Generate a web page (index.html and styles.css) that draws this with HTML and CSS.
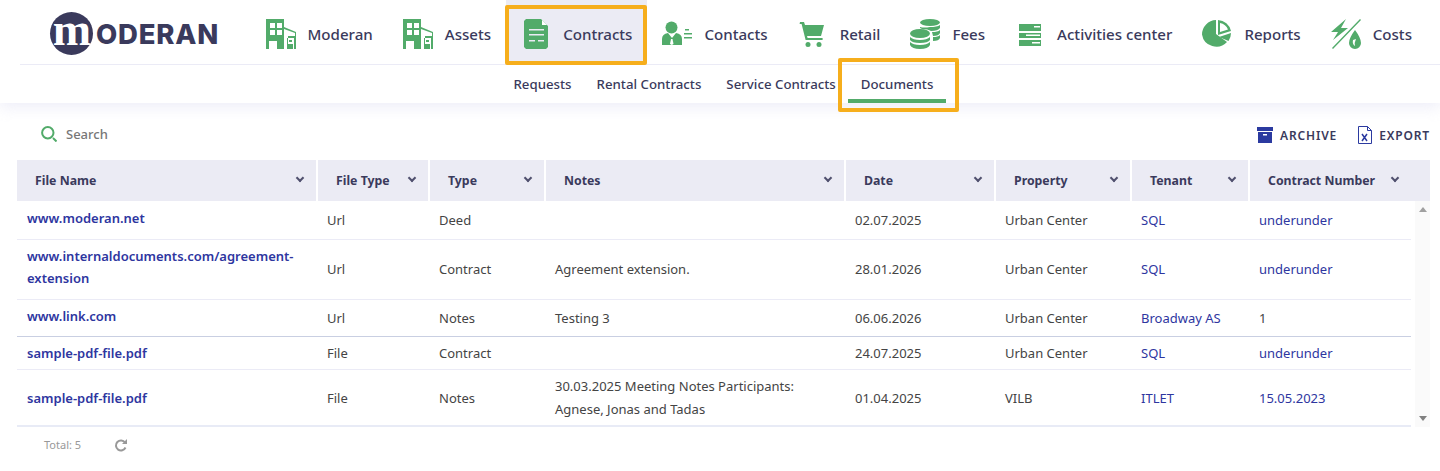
FILE: index.html
```html
<!DOCTYPE html>
<html lang="en">
<head>
  <meta charset="UTF-8">
  <title>Documents</title>
  <link rel="stylesheet" href="styles.css">
</head>
<body>
  <header class="top">
    <div class="main-nav">
      <div class="logo"><span class="logo-mark">m</span><span class="logo-text">ODERAN</span></div>
      <nav class="menu">
        <a class="menu-item">
          <svg class="menu-icon" viewBox="0 0 30 30"><path fill="#52ab6a" fill-rule="evenodd" d="M0 0h18v8l12 5v17h-8v-13h7v-3l-11-4v20h-7v-8h-8v8h-3zM4 4v5h5v-5zM11 4v5h5v-5zM4 11v5h5v-5zM11 11v5h5v-5zM21 19v11h1v-5h5v5h1v-11zM23 21h3v2h-3z"/></svg>
          Moderan
        </a>
        <a class="menu-item">
          <svg class="menu-icon" viewBox="0 0 30 30"><path fill="#52ab6a" fill-rule="evenodd" d="M0 0h18v8l12 5v17h-8v-13h7v-3l-11-4v20h-7v-8h-8v8h-3zM4 4v5h5v-5zM11 4v5h5v-5zM4 11v5h5v-5zM11 11v5h5v-5zM21 19v11h1v-5h5v5h1v-11zM23 21h3v2h-3z"/></svg>
          Assets
        </a>
        <a class="menu-item active">
          <svg class="menu-icon" viewBox="0 0 30 30"><path fill="#52ab6a" fill-rule="evenodd" d="M5 0h15l7 7v21l-2 2h-20l-2-2v-26zM8 10v1.500h15v-1.500zM8 15v1.500h15v-1.500zM8 21v1.500h6v-1.500zM17 21v1.500h6v-1.500z"/><path fill="#fff" d="M21 1l5 5h-5z"/></svg>
          Contracts
        </a>
        <a class="menu-item">
          <svg class="menu-icon" viewBox="0 0 30 30"><circle cx="9.500" cy="8.500" r="6" fill="#52ab6a"/><path fill="#52ab6a" d="M0 26v-6q0-5 6-6l4 5 4-5q6 1 6 6v6z"/><path fill="#fff" d="M9 20h1.500l1 5-1.700 1-1.800-1z"/><path fill="#52ab6a" d="M23 10h4v1.500h-4zM22 14h8v1.500h-8zM22 18h8v1.500h-8z"/></svg>
          Contacts
        </a>
        <a class="menu-item">
          <svg class="menu-icon" viewBox="0 0 30 30"><path fill="#52ab6a" d="M2 3h4l1 3h19l-3 11h-14l.6 2h15v2h-17l-4-16h-2z"/><circle cx="10" cy="25.500" r="2.500" fill="#52ab6a"/><circle cx="21" cy="25.500" r="2.500" fill="#52ab6a"/></svg>
          Retail
        </a>
        <a class="menu-item">
          <svg class="menu-icon" viewBox="0 0 30 30"><ellipse cx="20" cy="3.500" rx="10" ry="3.500" fill="#52ab6a"/><path fill="#52ab6a" d="M20 8q7 0 10-2v3q-2 3-9 3-3-2-9-2l-2-1v-1q4 1 10 0zM22 13q6 0 8-2v3q-1 3-7 3zM23 18q5 0 7-2v3q-1 3-7 3z"/><ellipse cx="10" cy="14.500" rx="10" ry="4.500" fill="#52ab6a"/><path fill="#52ab6a" d="M0 18q3 3 10 3t10-3v3q-2 3-10 3t-10-3zM0 23q3 3 10 3t10-3v3q-2 4-10 4t-10-4z"/></svg>
          Fees
        </a>
        <a class="menu-item">
          <svg class="menu-icon" viewBox="0 0 30 30"><path fill="#52ab6a" fill-rule="evenodd" d="M4 5h22v7h-22zM19 7v1.500h6v-1.500zM4 14h22v5h-22zM11 15.500v1.500h14v-1.500zM4 21h22v6h-22zM17 23v1.500h8v-1.500z"/></svg>
          Activities center
        </a>
        <a class="menu-item">
          <svg class="menu-icon" viewBox="0 0 30 30"><path fill="#52ab6a" d="M14 1v14l11 8a14.500 14.500 0 0 1-25-7.500a14.500 14.500 0 0 1 14-14.500z"/><path fill="#52ab6a" fill-rule="evenodd" d="M16 1a14 14 0 0 1 13 11l-13 4zM18 4v9l8-2.500a11 11 0 0 0-8-6.500z"/><path fill="#52ab6a" d="M17 18l12-4a14 14 0 0 1-2.500 8z"/></svg>
          Reports
        </a>
        <a class="menu-item">
          <svg class="menu-icon" viewBox="0 0 30 30"><path fill="#52ab6a" d="M15 0l-15 13h7l-5 8 15-12h-7zM29 0l1 1-28 29-1-1z"/><path fill="#52ab6a" fill-rule="evenodd" d="M24 11q6 8 6 13a6 6 0 0 1-12 0q0-5 6-13zM22 21q-1 4 2 6-1-3 1-7z"/></svg>
          Costs
        </a>
      </nav>
    </div>
    <nav class="sub-nav">
      <a class="sub-item">Requests</a>
      <a class="sub-item">Rental Contracts</a>
      <a class="sub-item">Service Contracts</a>
      <a class="sub-item active">Documents</a>
    </nav>
  </header>

  <div class="toolbar">
    <div class="search">
      <svg class="search-icon" viewBox="0 0 16 16"><circle cx="6.800" cy="6.800" r="5.700" fill="none" stroke="#52ab6a" stroke-width="2"/><path stroke="#52ab6a" stroke-width="2" d="M12 12l3.500 3.500"/></svg>
      Search
    </div>
    <div class="actions">
      <a class="action">
        <svg class="action-icon" viewBox="0 0 16 16"><path fill="#2b3aa0" d="M0 0h16v4h-16zM1 5h14v11h-14z"/><path fill="#fff" d="M6 7h4v1.500h-4z"/></svg>
        ARCHIVE
      </a>
      <a class="action">
        <svg class="export-icon" viewBox="0 0 16 18"><path fill="none" stroke="#2b3aa0" d="M1.500.5h9l4 4v13h-13z"/><path fill="none" stroke="#2b3aa0" d="M10.500.5v4h4"/><path stroke="#2b3aa0" stroke-width="1.500" d="M5 8l5 7M10 8l-5 7"/></svg>
        EXPORT
      </a>
    </div>
  </div>

  <section class="grid">
    <div class="grid-head">
      <div class="head-cell">File Name<span class="chevron"></span></div>
      <div class="head-cell">File Type<span class="chevron"></span></div>
      <div class="head-cell">Type<span class="chevron"></span></div>
      <div class="head-cell">Notes<span class="chevron"></span></div>
      <div class="head-cell">Date<span class="chevron"></span></div>
      <div class="head-cell">Property<span class="chevron"></span></div>
      <div class="head-cell">Tenant<span class="chevron"></span></div>
      <div class="head-cell last">Contract Number<span class="chevron"></span></div>
    </div>
    <div class="grid-body">
      <div class="rows">
        <div class="row row-1">
          <div class="cell name raised">www.moderan.net</div>
          <div class="cell">Url</div>
          <div class="cell">Deed</div>
          <div class="cell"></div>
          <div class="cell">02.07.2025</div>
          <div class="cell">Urban Center</div>
          <div class="cell link">SQL</div>
          <div class="cell link">underunder</div>
        </div>
        <div class="row row-2">
          <div class="cell name raised">www.internaldocuments.com/agreement-extension</div>
          <div class="cell">Url</div>
          <div class="cell">Contract</div>
          <div class="cell">Agreement extension.</div>
          <div class="cell">28.01.2026</div>
          <div class="cell">Urban Center</div>
          <div class="cell link">SQL</div>
          <div class="cell link">underunder</div>
        </div>
        <div class="row row-3">
          <div class="cell name raised">www.link.com</div>
          <div class="cell">Url</div>
          <div class="cell">Notes</div>
          <div class="cell">Testing 3</div>
          <div class="cell">06.06.2026</div>
          <div class="cell">Urban Center</div>
          <div class="cell link">Broadway AS</div>
          <div class="cell">1</div>
        </div>
        <div class="row row-4">
          <div class="cell name">sample-pdf-file.pdf</div>
          <div class="cell">File</div>
          <div class="cell">Contract</div>
          <div class="cell"></div>
          <div class="cell">24.07.2025</div>
          <div class="cell">Urban Center</div>
          <div class="cell link">SQL</div>
          <div class="cell link">underunder</div>
        </div>
        <div class="row row-5">
          <div class="cell name">sample-pdf-file.pdf</div>
          <div class="cell">File</div>
          <div class="cell">Notes</div>
          <div class="cell">30.03.2025 Meeting Notes Participants: Agnese, Jonas and Tadas</div>
          <div class="cell">01.04.2025</div>
          <div class="cell">VILB</div>
          <div class="cell link">ITLET</div>
          <div class="cell link">15.05.2023</div>
        </div>
      </div>
      <div class="scrollbar">
        <span class="arrow-up"></span>
        <span class="arrow-down"></span>
      </div>
    </div>
  </section>

  <footer class="pager">
    <span class="total">Total: 5</span>
    <svg class="refresh" viewBox="0 0 14 14"><path fill="none" stroke="#999" stroke-width="2" d="M11.500 9.500a5 5 0 1 1-.5-5"/><path fill="#999" d="M13 1v5h-5z"/></svg>
  </footer>
</body>
</html>
```

FILE: styles.css
```css
:root {
  --green: #52ab6a;
  --dark: #3a3a5c;
  --link: #2e369f;
  --head-bg: #ebebf4;
  --line: #ebebf6;
  --orange: #f6ae1c;
  --columns: 299px 110px 114px 298px 148px 134px 116px 1fr;
}

* {
  box-sizing: border-box;
}

html, body {
  height: 100%;
}

body {
  margin: 0;
  background: #fff;
  color: #444;
  font-family: "Noto Sans", Arial, sans-serif;
  font-size: 13px;
  overflow: hidden;
}

/* top navigation */
.top {
  height: 103px;
  box-shadow: 0 4px 14px rgba(215, 215, 240, 0.45);
}

.main-nav {
  display: flex;
  height: 65px;
  margin-left: 20px;
  padding-left: 30px;
  border-bottom: 1px solid var(--line);
}

.logo {
  display: flex;
  align-items: center;
  width: 200.500px;
  height: 64px;
  padding-top: 3px;
}

.logo-mark {
  display: flex;
  align-items: center;
  justify-content: center;
  width: 43px;
  height: 43px;
  padding-bottom: 9px;
  border-radius: 50%;
  background: var(--dark);
  color: #fff;
  font-family: "Liberation Serif", serif;
  font-size: 46px;
  font-weight: 700;
  letter-spacing: -1px;
}

.logo-text {
  margin-left: 3px;
  color: var(--dark);
  font-family: Inter, sans-serif;
  font-size: 27.500px;
  font-weight: 800;
  letter-spacing: 0.8px;
}

.menu {
  display: flex;
}

.menu-item {
  position: relative;
  display: flex;
  align-items: center;
  gap: 12px;
  height: 64px;
  padding: 4px 15px 0;
  color: var(--dark);
  font-size: 15.100px;
  font-weight: 500;
  white-space: nowrap;
}

.menu-icon {
  width: 30px;
  height: 30px;
  flex: none;
}

.menu-item.active {
  background: var(--head-bg);
}

/* orange annotation boxes */
.menu-item.active::after,
.sub-item.active::after {
  content: "";
  position: absolute;
  border: 4px solid var(--orange);
  border-radius: 2px;
}

.menu-item.active::after {
  top: 5px;
  left: -1px;
  right: 0;
  bottom: -1px;
}

.sub-nav {
  display: flex;
  height: 38px;
  padding-left: 501px;
}

.sub-item {
  position: relative;
  display: flex;
  align-items: center;
  height: 38px;
  padding: 0 12.500px;
  color: var(--dark);
  font-size: 13.250px;
  font-weight: 500;
  white-space: nowrap;
}

.sub-item.active::before {
  content: "";
  position: absolute;
  left: 0;
  right: 0;
  bottom: 0;
  height: 4px;
  background: var(--green);
}

.sub-item.active::after {
  top: -7px;
  left: -10px;
  right: -13px;
  bottom: -9px;
}

/* toolbar */
.toolbar {
  display: flex;
  align-items: center;
  justify-content: space-between;
  height: 57px;
  padding: 6px 10px 0 41px;
}

.search {
  display: flex;
  align-items: center;
  gap: 9px;
  margin-top: -2px;
  color: #777;
  font-size: 13px;
  font-weight: 500;
}

.search-icon {
  width: 16px;
  height: 16px;
}

.actions {
  display: flex;
  gap: 20px;
  margin-top: 1px;
}

.action {
  display: flex;
  align-items: center;
  gap: 7px;
  color: var(--dark);
  font-size: 12px;
  font-weight: 600;
  letter-spacing: 0.850px;
}

.action:last-child {
  gap: 6px;
}

.action-icon {
  width: 16px;
  height: 16px;
}

.export-icon {
  width: 16px;
  height: 18px;
}

/* table */
.grid {
  margin: 0 10px 0 17px;
}

.grid-head,
.row {
  display: grid;
  grid-template-columns: var(--columns);
  column-gap: 2px;
}

.grid-head {
  height: 41px;
}

.head-cell {
  display: flex;
  align-items: center;
  justify-content: space-between;
  padding: 0 11px 1px 18px;
  background: var(--head-bg);
  color: var(--dark);
  font-size: 12.300px;
  font-weight: 700;
  white-space: nowrap;
}

.head-cell.last {
  padding-right: 30px;
}

.chevron {
  width: 6px;
  height: 6px;
  margin: -4px 2px 0 0;
  border-right: 2px solid #50506e;
  border-bottom: 2px solid #50506e;
  transform: rotate(45deg);
}

.grid-body {
  display: flex;
  justify-content: space-between;
}

.rows {
  width: 1394px;
}

.row {
  border-bottom: 1px solid var(--line);
}

.row-1 { height: 39px; }
.row-2 { height: 60px; }
.row-3 { height: 37px; border-bottom-color: #c9cfe2; }
.row-4 { height: 33px; }
.row-5 { height: 56px; border-bottom-color: #e8ebf6; box-shadow: 0 1px 0 #e8ebf6; margin-bottom: 1px; }

.cell {
  align-self: center;
  padding: 0 9px;
  line-height: 23px;
}

.row-5 .cell {
  padding-top: 1px;
}

.name {
  padding-left: 10px;
  color: var(--link);
  font-weight: 600;
  line-height: 22px;
}

.raised {
  padding-bottom: 4px;
}

.row-2 .raised {
  padding-bottom: 6px;
}

.link {
  color: var(--link);
}

.scrollbar {
  display: flex;
  flex-direction: column;
  justify-content: space-between;
  align-items: center;
  width: 15px;
  padding: 6px 0;
  background: #fafafa;
}

.arrow-up,
.arrow-down {
  width: 0;
  height: 0;
  border-left: 4.500px solid transparent;
  border-right: 4.500px solid transparent;
}

.arrow-up {
  border-bottom: 5px solid #a0a0a0;
}

.arrow-down {
  border-top: 5px solid #808080;
}

/* footer */
.pager {
  display: flex;
  align-items: center;
  gap: 33px;
  height: 35px;
  padding-left: 44px;
}

.total {
  color: #999;
  font-size: 11px;
}

.refresh {
  width: 14px;
  height: 14px;
}
```
